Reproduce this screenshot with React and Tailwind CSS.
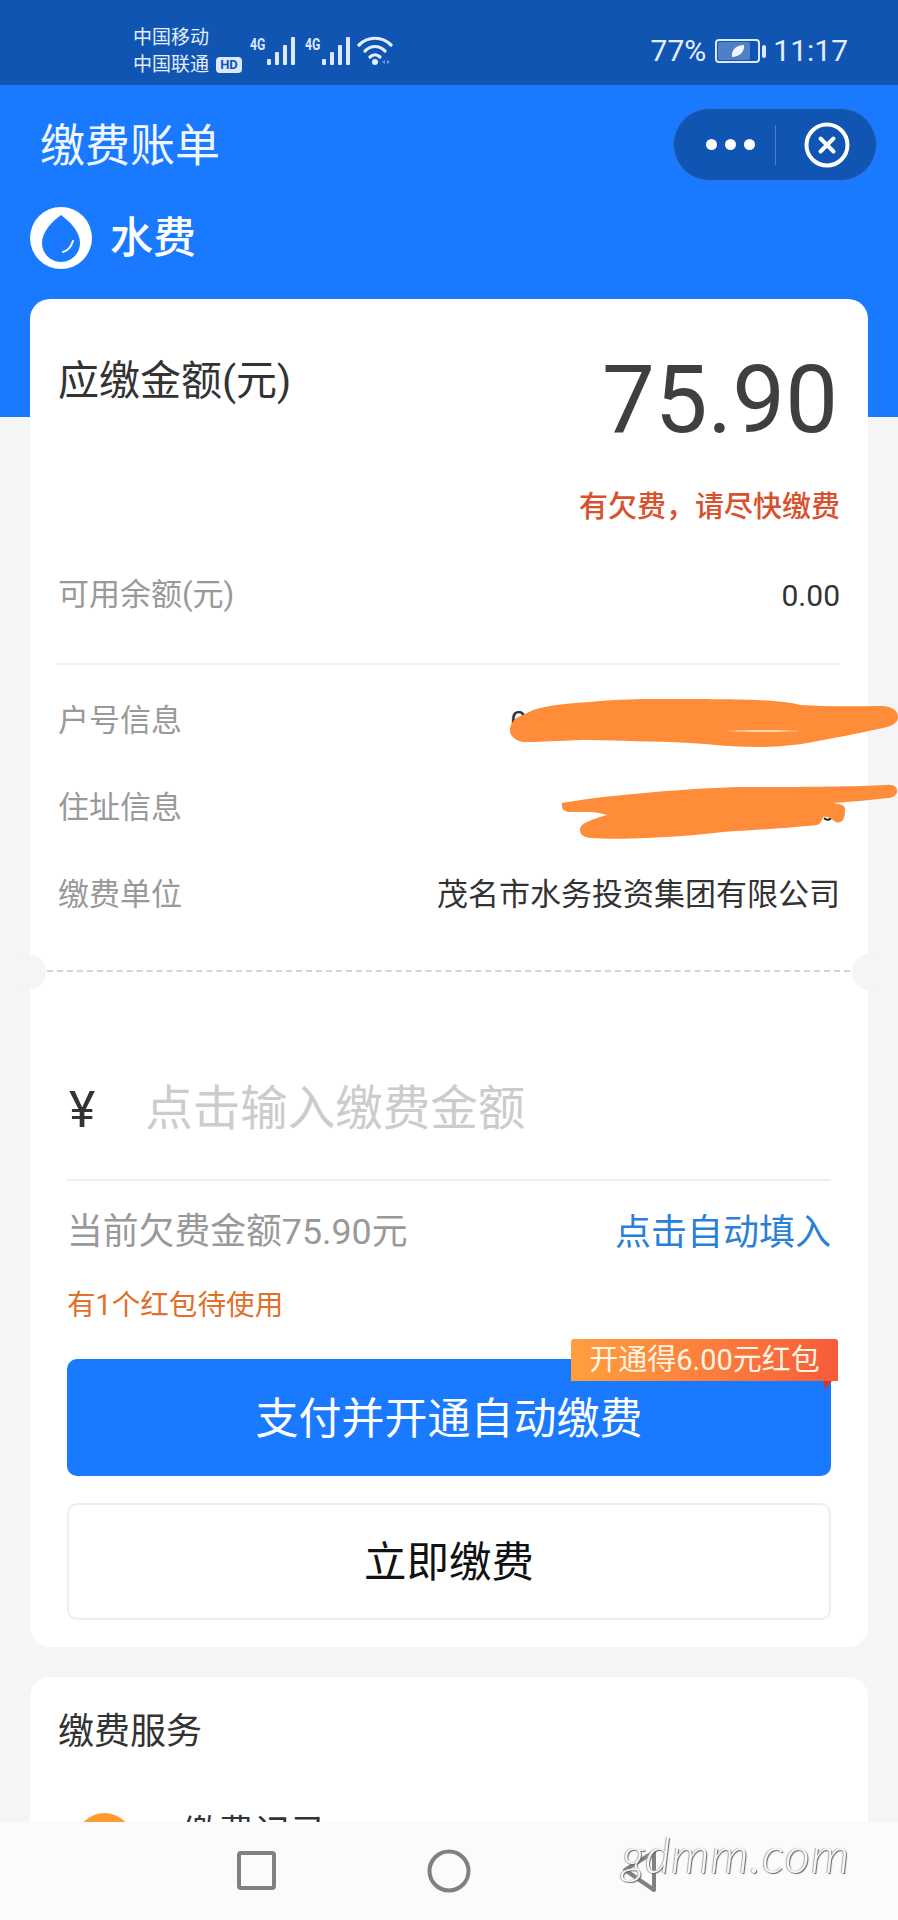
const font = { fontFamily: 'Roboto, "Noto Sans CJK SC", sans-serif' };

function Signal() {
  return (
    <div className="flex items-start w-[45px]">
      <span className="block w-[17px] text-[17px] leading-[14px] font-bold text-[#dbe9ff] scale-x-[0.72] origin-left whitespace-nowrap">4G</span>
      <svg width="28" height="28" viewBox="0 0 28 28">
        <g fill="#dbe9ff">
          <rect x="0" y="22" width="4" height="6" rx="1" />
          <rect x="8" y="15" width="4" height="13" rx="1" />
          <rect x="16" y="8" width="4" height="20" rx="1" />
          <rect x="24" y="0" width="4" height="28" rx="1" />
        </g>
      </svg>
    </div>
  );
}

function InfoRow({ label, value }) {
  return (
    <div className="flex items-center justify-between h-[87px]">
      <span className="text-[31px] text-[#999999]">{label}</span>
      {value}
    </div>
  );
}

export default function App() {
  return (
    <div className="relative w-[898px] h-[1920px] overflow-hidden bg-[#f5f5f5]" style={font}>
      {/* status bar */}
      <div className="h-[85px] bg-[#1155b3] flex items-center pt-[17px] pl-[133px] pr-[50px] text-[#e4eeff]">
        <div className="w-[117px] text-[19px] leading-[27px]">
          <div>中国移动</div>
          <div className="flex items-center">
            中国联通
            <span className="ml-[7px] w-[26px] h-[16px] rounded-[4px] bg-[#dbe9ff] text-[#1155b3] text-[13px] leading-[16px] font-bold text-center">HD</span>
          </div>
        </div>
        <div className="flex items-start gap-[10px]">
          <Signal />
          <Signal />
          <svg width="36" height="30" viewBox="0 0 36 30" className="ml-[-3px] mt-[-1px]">
            <g fill="none" stroke="#e4eeff" strokeWidth="3.2" strokeLinecap="round">
              <path d="M2 9C11 0 25 0 34 9" />
              <path d="M8 15C14 9 22 9 28 15" />
              <path d="M13 21C16 18 20 18 23 21" />
            </g>
            <circle cx="18" cy="26" r="3" fill="#e4eeff" />
            <path d="M25 26l3-2v4zM33 26l-3-2v4z" fill="#6f9be0" />
          </svg>
        </div>
        <div className="ml-auto flex items-center">
          <span className="text-[30px] leading-none">77%</span>
          <div className="relative ml-[9px] w-[45px] h-[24px] rounded-[4px] border-2 border-[#dbe9ff] p-[1px]">
            <div className="h-full w-[32px] rounded-[2px] bg-[#4f7fc6]"></div>
            <svg width="16" height="16" viewBox="0 0 16 16" className="absolute left-[13px] top-[2px]">
              <path d="M2 14C1 7 6 2 14 2 15 9 9 14 2 14Z" fill="#f2f6ff" />
            </svg>
          </div>
          <div className="ml-[2px] w-[4px] h-[13px] rounded-[2px] bg-[#dbe9ff]"></div>
          <span className="ml-[7px] text-[30px] leading-none">11:17</span>
        </div>
      </div>

      {/* blue header */}
      <div className="h-[332px] bg-[#1a7aff] text-white">
        <div className="flex items-start justify-between pl-[40px] pr-[21px] pt-[23px] h-[122px]">
          <div className="text-[45px] leading-[73px] pt-[2px] text-[#f2f7ff]">缴费账单</div>
          <div className="flex items-center w-[204px] h-[73px] rounded-full bg-[#1155b3] border border-[#2c74d9]">
            <div className="flex gap-[8px] ml-[32px]">
              <span className="w-[11px] h-[11px] rounded-full bg-white"></span>
              <span className="w-[11px] h-[11px] rounded-full bg-white"></span>
              <span className="w-[11px] h-[11px] rounded-full bg-white"></span>
            </div>
            <div className="ml-[20px] w-px h-[40px] bg-[#4a80cc]"></div>
            <svg width="46" height="46" viewBox="0 0 46 46" className="ml-[28px]">
              <circle cx="23" cy="23" r="20.5" fill="none" stroke="#fff" strokeWidth="4" />
              <path d="M16.500 16.500l13 13M29.500 16.500l-13 13" stroke="#fff" strokeWidth="4" strokeLinecap="round" />
            </svg>
          </div>
        </div>
        <div className="flex items-center pl-[30px]">
          <svg width="62" height="62" viewBox="0 0 62 62">
            <circle cx="31" cy="31" r="31" fill="#fff" />
            <path d="M31 8C23 14 12 24 12 36C12 47 21 55 31 55C41 55 50 47 50 36C50 24 39 14 31 8Z" fill="#1a7aff" />
            <path d="M33 45C37 44 41 40 43 34" fill="none" stroke="#fff" strokeWidth="2" strokeLinecap="round" />
          </svg>
          <span className="ml-[18px] text-[43px] leading-none font-medium">水费</span>
        </div>
      </div>

      {/* bill card */}
      <div className="relative mx-[30px] mt-[-118px] h-[1348px] rounded-[20px] bg-white">
        <div className="px-[28px] h-[673px]">
          <div className="flex justify-between h-[144px]">
            <span className="mt-[57px] text-[41px] leading-[50px] text-[#333333]">应缴金额(元)</span>
            <span className="mt-[47px] mr-[2px] text-[94px] leading-[108px] text-[#3f3f3f]">75.90</span>
          </div>
          <div className="mt-[44px] text-right text-[29px] leading-[40px] font-medium text-[#d9512c]">有欠费，请尽快缴费</div>
          <div className="mt-[44px] flex justify-between items-center h-[48px]">
            <span className="text-[31px] text-[#999999]">可用余额(元)</span>
            <span className="text-[30px] text-[#333333]">0.00</span>
          </div>
          <div className="mt-[44px] h-[2px] bg-[#f0f0f0] ml-[-2px]"></div>
          <div className="pt-[13px]">
            <InfoRow label="户号信息" value={<span className="mr-[313px] text-[30px] text-[#333333]">0</span>} />
            <InfoRow label="住址信息" value={<span></span>} />
            <InfoRow label="缴费单位" value={<span className="text-[31px] text-[#333333]">茂名市水务投资集团有限公司</span>} />
          </div>
        </div>

        {/* tear line */}
        <div className="relative h-0">
          <div className="absolute left-[17px] right-[18px] top-[-2px] border-t-2 border-dashed border-[#d4d4d4]"></div>
          <div className="absolute left-[-20px] top-[-18px] w-[36px] h-[36px] rounded-full bg-[#f5f5f5]"></div>
          <div className="absolute right-[-20px] top-[-18px] w-[36px] h-[36px] rounded-full bg-[#f5f5f5]"></div>
        </div>

        <div className="px-[37px]">
          <div className="flex items-center h-[209px] pt-[68px] border-b-2 border-[#eeeeee]">
            <span className="ml-[2px] text-[50px] text-[#333333] leading-none">¥</span>
            <span className="ml-[50px] text-[47.5px] leading-none text-[#cccccc]">点击输入缴费金额</span>
          </div>
          <div className="flex items-center justify-between h-[102px] pt-[2px]">
            <span className="text-[35.8px] text-[#999999]">当前欠费金额75.90元</span>
            <span className="text-[36px] text-[#2a7fd6]">点击自动填入</span>
          </div>
          <div className="h-[44px] text-[28.6px] leading-[44px] text-[#e0702a]">有1个红包待使用</div>
          <div className="relative mt-[32px] h-[117px] rounded-[10px] bg-[#1a7aff] flex items-center justify-center pt-[4px] text-[43px] text-white">
            支付并开通自动缴费
            <div className="absolute right-[-7px] top-[-20px] w-[267px] h-[42px] rounded-t-[3px] bg-gradient-to-r from-[#ff9f3e] to-[#f75b3a] text-[29px] leading-[42px] text-center text-[#fff5e6]">
              开通得6.00元红包
            </div>
            <svg width="8" height="9" viewBox="0 0 8 9" className="absolute right-[-1px] top-[22px]">
              <path d="M0 0H8L0 9Z" fill="#d8352b" />
            </svg>
          </div>
          <div className="mt-[27px] h-[117px] rounded-[10px] border-2 border-[#eeeeee] flex items-center justify-center pt-[3px] text-[42.5px] text-[#111111]">
            立即缴费
          </div>
        </div>
      </div>

      {/* services card */}
      <div className="mx-[30px] mt-[30px] h-[300px] rounded-[20px] bg-white px-[28px]">
        <div className="pt-[30px] text-[36px] leading-[50px] text-[#333333]">缴费服务</div>
        <div className="mt-[56px] flex items-start pl-[18px]">
          <div className="w-[57px] h-[57px] rounded-full bg-[#ff9a2e]"></div>
          <span className="ml-[49px] mt-[-4px] text-[36px] leading-[50px] text-[#333333]">缴费记录</span>
        </div>
      </div>

      {/* redaction scribbles */}
      <svg className="absolute left-0 top-[690px]" width="898" height="160" viewBox="0 0 898 160">
        <path d="M824 128C827 131 830 130 832 127" fill="none" stroke="#222" strokeWidth="2" />
        <g fill="#ff8c38">
          <path d="M510 38C512 30 517 27 523 25L533 20C550 15 570 13 590 12C620 9 640 9 657 9C700 9 730 9 757 10C775 11 790 12 800 15C830 17 860 16 883 16C893 17 898 21 898 27C898 33 892 36 883 38C860 43 840 47 823 50C800 55 780 57 757 57C730 57 710 54 690 53C650 51 620 51 590 50C570 50 545 52 523 52C514 50 509 45 510 38Z" />
          <path d="M562 113C600 106 680 99 737 97C790 97 850 97 887 95C894 94 898 98 897 102C896 106 892 108 887 108C870 110 850 112 833 113C842 114 846 116 845 120C845 127 843 132 840 132C837 133 835 132 833 130C830 127 826 126 823 127C822 131 820 134 817 135C790 138 750 140 723 142C700 145 670 147 647 148C625 149 605 149 590 148C583 147 580 144 580 140C580 136 583 134 587 132C593 129 600 127 607 125C600 123 595 122 590 122C580 122 574 122 568 122C564 121 562 119 562 117Z" />
        </g>
        <path d="M727 41C745 42 780 42 800 41C780 40 745 40 727 41Z" fill="#fdf0dc" />
      </svg>

      {/* navigation bar */}
      <div className="absolute left-0 right-0 bottom-0 h-[98px] bg-[#fbfbfb]">
        <svg className="absolute left-0 top-0" width="898" height="98" viewBox="0 0 898 98">
          <rect x="239" y="31" width="35" height="35" rx="2" fill="none" stroke="#808080" strokeWidth="4" />
          <circle cx="449" cy="49" r="19.5" fill="none" stroke="#808080" strokeWidth="4" />
          <path d="M625 48L654 30V68Z" fill="none" stroke="#808080" strokeWidth="4" strokeLinejoin="round" />
        </svg>
        <span
          className="absolute left-[622px] top-[4px] text-[49px] leading-[56px] italic font-light text-[#f7f7f7] tracking-[1px] [text-shadow:1px_1px_1px_#666,-1px_0_1px_#aaaaaa]"
          style={{ fontFamily: 'Lato, sans-serif' }}
        >
          gdmm.com
        </span>
      </div>
    </div>
  );
}
